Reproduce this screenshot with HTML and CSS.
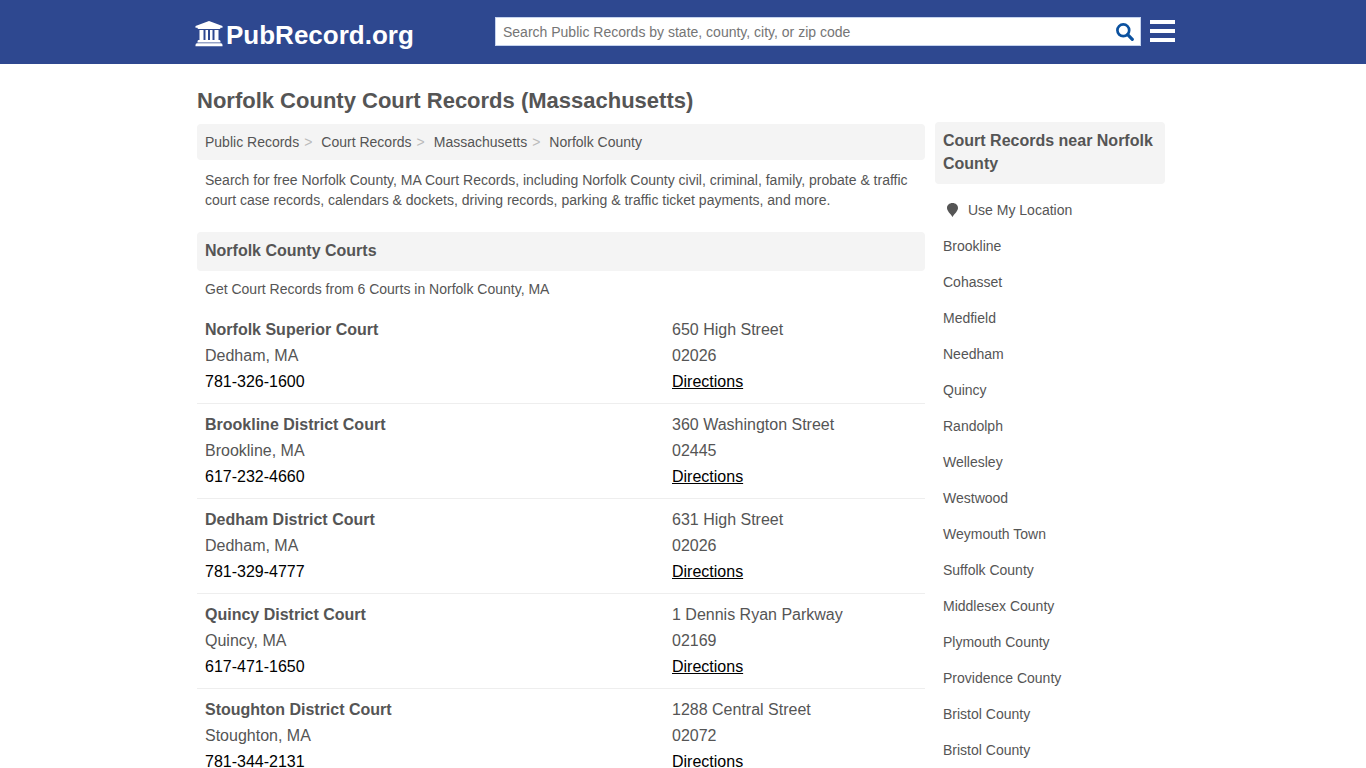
FILE: index.html
```html
<!DOCTYPE html>
<html lang="en">
<head>
<meta charset="utf-8">
<meta name="viewport" content="width=device-width, initial-scale=1">
<title>Norfolk County Court Records (Massachusetts)</title>
<link rel="stylesheet" href="styles.css">
</head>
<body>
<header class="site-header">
  <div class="header-inner">
    <a class="logo" href="#">
      <svg class="logo-icon" viewBox="0 0 28 26" aria-hidden="true"><path fill="currentColor" d="M14 0 27.500 5V6.800H25.500Q25.500 8 24.500 8H3.500Q2.500 8 2.500 6.800H.5V5ZM4.500 9H8.500V19H10.500V9H13V19H15V9H17.500V19H19.500V9H23.500V19H24.500Q25.500 19 25.500 20.500V21.500H2.500V20.500Q2.500 19 3.500 19H4.500ZM2 22.300H26Q27.500 22.300 27.500 24V25.300H.5V24Q.5 22.300 2 22.300Z"/></svg>
      <span>PubRecord.org</span>
    </a>
    <form class="search" role="search">
      <input class="search-input" type="text" aria-label="Search public records" placeholder="Search Public Records by state, county, city, or zip code">
      <button class="search-button" type="button" aria-label="Search">
        <svg viewBox="0 0 18 18" aria-hidden="true"><circle cx="7.300" cy="7.300" r="5.900" fill="none" stroke="currentColor" stroke-width="2.700"/><path d="M11.700 11.700 16.300 16.300" stroke="currentColor" stroke-width="3.200" stroke-linecap="round"/></svg>
      </button>
    </form>
    <button class="menu-button" type="button" aria-label="Menu">
      <svg viewBox="0 0 25 22" aria-hidden="true"><path fill="currentColor" d="M0 0H25V4H0ZM0 9H25V13H0ZM0 18H25V22H0Z"/></svg>
    </button>
  </div>
</header>
<div class="page">
  <h1 class="page-title">Norfolk County Court Records (Massachusetts)</h1>
  <div class="columns">
    <main class="main">
      <nav aria-label="Breadcrumb">
        <ol class="breadcrumb">
          <li><a href="#">Public Records</a></li>
          <li><a href="#">Court Records</a></li>
          <li><a href="#">Massachusetts</a></li>
          <li><a href="#">Norfolk County</a></li>
        </ol>
      </nav>
      <p class="intro">Search for free Norfolk County, MA Court Records, including Norfolk County civil, criminal, family, probate &amp; traffic court case records, calendars &amp; dockets, driving records, parking &amp; traffic ticket payments, and more.</p>
      <h2 class="section-title">Norfolk County Courts</h2>
      <p class="summary">Get Court Records from 6 Courts in Norfolk County, MA</p>
      <ul class="courts">
        <li class="court">
          <div><h3 class="court-name">Norfolk Superior Court</h3><p>Dedham, MA</p><a class="phone" href="tel:781-326-1600">781-326-1600</a></div>
          <div><p>650 High Street</p><p>02026</p><a class="directions" href="#">Directions</a></div>
        </li>
        <li class="court">
          <div><h3 class="court-name">Brookline District Court</h3><p>Brookline, MA</p><a class="phone" href="tel:617-232-4660">617-232-4660</a></div>
          <div><p>360 Washington Street</p><p>02445</p><a class="directions" href="#">Directions</a></div>
        </li>
        <li class="court">
          <div><h3 class="court-name">Dedham District Court</h3><p>Dedham, MA</p><a class="phone" href="tel:781-329-4777">781-329-4777</a></div>
          <div><p>631 High Street</p><p>02026</p><a class="directions" href="#">Directions</a></div>
        </li>
        <li class="court">
          <div><h3 class="court-name">Quincy District Court</h3><p>Quincy, MA</p><a class="phone" href="tel:617-471-1650">617-471-1650</a></div>
          <div><p>1 Dennis Ryan Parkway</p><p>02169</p><a class="directions" href="#">Directions</a></div>
        </li>
        <li class="court">
          <div><h3 class="court-name">Stoughton District Court</h3><p>Stoughton, MA</p><a class="phone" href="tel:781-344-2131">781-344-2131</a></div>
          <div><p>1288 Central Street</p><p>02072</p><a class="directions" href="#">Directions</a></div>
        </li>
      </ul>
    </main>
    <aside class="sidebar">
      <h2 class="section-title">Court Records near Norfolk County</h2>
      <ul class="places">
        <li><a class="locate" href="#"><svg class="pin" viewBox="0 0 11 14" aria-hidden="true"><path fill="currentColor" d="M5.500 0C8.800 0 11 2.200 11 5C11 8 8 10 5.500 14C3 10 0 8 0 5C0 2.200 2.200 0 5.500 0Z"/></svg><span>Use My Location</span></a></li>
        <li><a href="#">Brookline</a></li>
        <li><a href="#">Cohasset</a></li>
        <li><a href="#">Medfield</a></li>
        <li><a href="#">Needham</a></li>
        <li><a href="#">Quincy</a></li>
        <li><a href="#">Randolph</a></li>
        <li><a href="#">Wellesley</a></li>
        <li><a href="#">Westwood</a></li>
        <li><a href="#">Weymouth Town</a></li>
        <li><a href="#">Suffolk County</a></li>
        <li><a href="#">Middlesex County</a></li>
        <li><a href="#">Plymouth County</a></li>
        <li><a href="#">Providence County</a></li>
        <li><a href="#">Bristol County</a></li>
        <li><a href="#">Bristol County</a></li>
      </ul>
    </aside>
  </div>
</div>
</body>
</html>
```
FILE: styles.css
```css
* { box-sizing: border-box; }

body {
  margin: 0;
  background: #fff;
  color: #555;
  font: 14px/20px "Liberation Sans", Arial, sans-serif;
}

h1, h2, h3, p, ul, ol { margin: 0; padding: 0; }
ul, ol { list-style: none; }
a { color: inherit; text-decoration: none; }
button { padding: 0; border: 0; background: none; cursor: pointer; }
svg { display: block; }

.site-header { background: #2e4890; }

.header-inner {
  display: flex;
  align-items: center;
  max-width: 984px;
  height: 64px;
  margin: 0 auto;
  padding: 0 0 2px 4px;
}

.logo {
  display: flex;
  align-items: center;
  gap: 3px;
  flex: 0 0 300px;
  padding-top: 8px;
  color: #fff;
  font-size: 26px;
  line-height: 32px;
  font-weight: bold;
}

.logo-icon { width: 28px; height: 26px; margin-bottom: 2px; }

.search {
  display: flex;
  flex: 1;
  height: 29px;
  background: #fff;
  border: 1px solid #c5d3ee;
}

.search-input {
  flex: 1;
  min-width: 0;
  padding: 2px 7px 0;
  border: 0;
  outline: 0;
  background: none;
  color: #555;
  font: inherit;
}

.search-input::placeholder { color: #757575; opacity: 1; }

.search-button { width: 32px; padding: 2px 0 0 8px; color: #0b519f; }
.search-button svg { width: 18px; height: 18px; }

.menu-button { margin-left: 9px; color: #fff; }
.menu-button svg { width: 25px; height: 22px; }

.page {
  max-width: 980px;
  margin: 0 auto;
  padding: 23px 8px 24px 4px;
}

.page-title { font-size: 22px; line-height: 28px; margin-bottom: 7px; }

.columns { display: flex; gap: 10px; align-items: flex-start; }
.main { flex: 1; min-width: 0; padding-top: 2px; }
.sidebar { flex: 0 0 230px; }

.breadcrumb {
  display: flex;
  flex-wrap: wrap;
  padding: 8px;
  border-radius: 4px;
  background: #f4f4f4;
}

.breadcrumb li + li::before {
  content: ">";
  padding: 0 9px 0 5px;
  color: #bbb;
}

.intro { padding: 10px 8px 22px; }

.section-title {
  padding: 7px 8px 9px;
  border-radius: 4px;
  background: #f4f4f4;
  font-size: 16px;
  line-height: 23px;
}

.summary { padding: 8px 8px 10px; }

.court {
  display: grid;
  grid-template-columns: 467px 1fr;
  padding: 8px;
  border-bottom: 1px solid #eee;
  font-size: 16px;
  line-height: 26px;
}

.court-name { font-size: 16px; line-height: 26px; }
.phone, .directions { color: #000; }
.directions { text-decoration: underline; }

.places { padding: 8px 8px 0; }
.places a { display: block; padding: 8px 0; }
.places .locate { display: flex; align-items: center; gap: 10px; padding-left: 4px; }
.pin { width: 11px; height: 14px; }
```
